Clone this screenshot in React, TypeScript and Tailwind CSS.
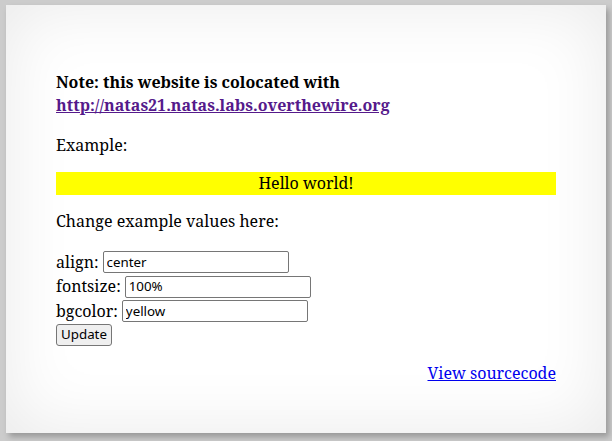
const serif = "font-['Noto_Serif','DejaVu_Serif',serif]";

function Field({ label, value }: { label: string; value: string }) {
  return (
    <div className="h-[24.5px] flex items-center">
      <span>{label}:</span>
      <input
        type="text"
        defaultValue={value}
        className="ml-[4px] w-[186px] h-[22px] px-[3px] border border-[#767676] rounded-[2px] bg-white text-[13.33px] text-black font-['Noto_Sans','Open_Sans',sans-serif] outline-none"
      />
    </div>
  );
}

export default function App() {
  return (
    <div className="w-[612px] h-[441px] bg-[#cccccc] pl-[6px] pt-[5px] overflow-hidden">
      <div
        className={`w-[600px] h-[428px] bg-white px-[50px] pt-[66px] text-[16px] leading-[23px] text-black ${serif}
          shadow-[inset_0_0_70px_rgba(0,0,0,0.09),3px_4px_6px_rgba(0,0,0,0.25)]`}
      >
        <p className="font-bold">
          Note: this website is colocated with
          <br />
          <a href="#" className="underline text-[#551a8b]">
            http://natas21.natas.labs.overthewire.org
          </a>
        </p>

        <p className="mt-[17px]">Example:</p>

        <div className="mt-[15px] bg-[#ffff00] text-center">Hello world!</div>

        <p className="mt-[15px]">Change example values here:</p>

        <form className="mt-[17px]" onSubmit={(e) => e.preventDefault()}>
          <Field label="align" value="center" />
          <Field label="fontsize" value="100%" />
          <Field label="bgcolor" value="yellow" />
          <button
            type="submit"
            className="block h-[22px] px-[4px] border border-[#767676] rounded-[3px] bg-[#efefef] text-[13.33px] leading-none font-['Noto_Sans','Open_Sans',sans-serif]"
          >
            Update
          </button>
        </form>

        <div className="mt-[16px] text-right">
          <a href="#" className="underline text-[#0000ee]">
            View sourcecode
          </a>
        </div>
      </div>
    </div>
  );
}
